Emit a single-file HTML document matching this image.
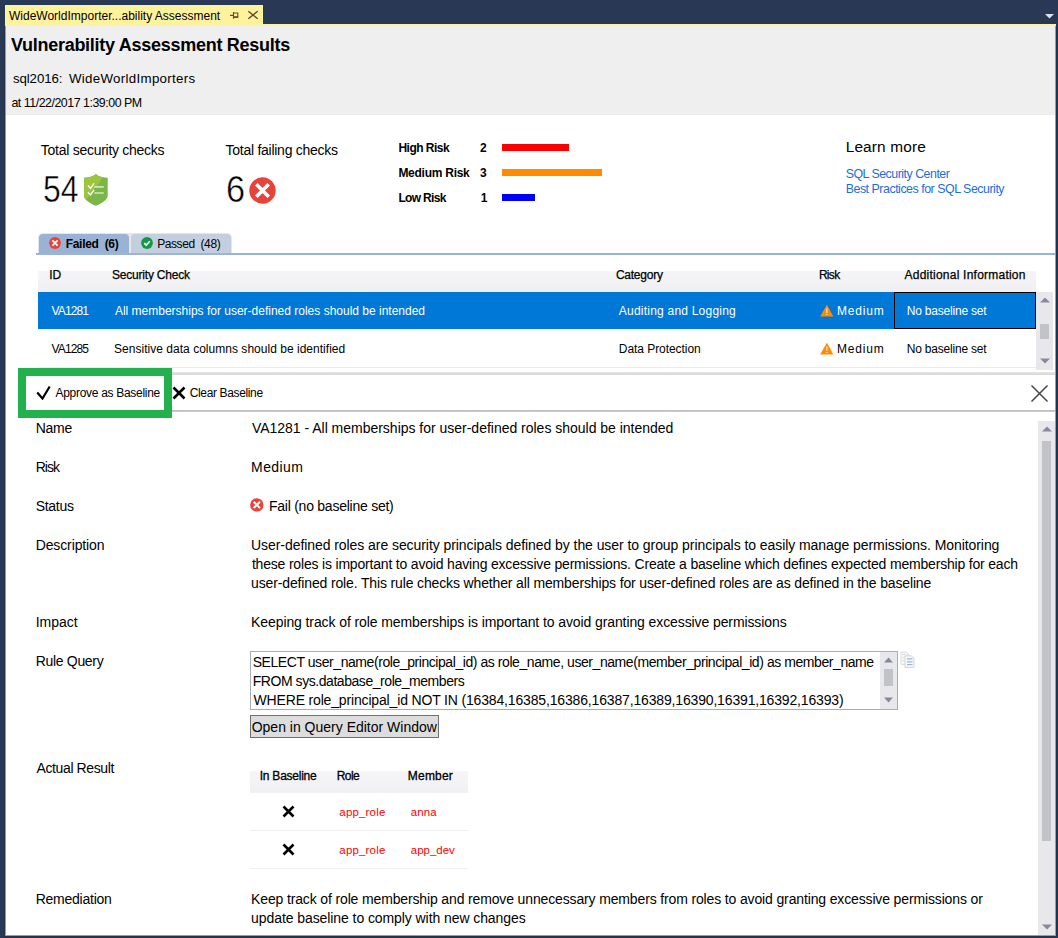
<!DOCTYPE html>
<html><head><meta charset="utf-8"><title>Vulnerability Assessment Results</title>
<style>
html,body{margin:0;padding:0;width:1058px;height:938px;overflow:hidden;background:#293955;}
body{position:relative;font-family:"Liberation Sans",sans-serif;color:#000;}
.t{position:absolute;white-space:pre;}
.r{position:absolute;}
</style></head><body>
<div class="r" style="left:0px;top:0px;width:1058px;height:938px;background:#293955;"></div>
<div class="r" style="left:5px;top:24px;width:1051px;height:2px;background:#FFF29D;"></div>
<div class="r" style="left:5px;top:5px;width:258px;height:21px;background:#FFF29D;"></div>
<div class="r" style="left:5px;top:26px;width:1051px;height:910px;background:#8d9dc2;"></div>
<div class="r" style="left:6px;top:26px;width:1049px;height:89px;background:#EFEFEF;"></div>
<div class="r" style="left:6px;top:114px;width:1049px;height:1px;background:#ECECEC;"></div>
<div class="r" style="left:6px;top:115px;width:1049px;height:820px;background:#FFFFFF;"></div>
<div class="r" style="left:4px;top:26px;width:1px;height:910px;background:#22304a;"></div>
<div class="r" style="left:1056px;top:26px;width:1px;height:910px;background:#22304a;"></div>
<div class="r" style="left:4px;top:936px;width:1053px;height:1px;background:#22304a;"></div>
<div class="t" id="t0" style="left:9.00px;top:9.84px;font-size:12px;line-height:12px;">WideWorldImporter...ability Assessment</div>
<svg class="r" style="left:229px;top:10px" width="11" height="11" viewBox="0 0 11 11"><path d="M1 5.4H4.5M4.5 2.1V8.8M4.5 3H8.8V7.2M4.5 7.1H8.8" stroke="#5c4f32" stroke-width="1.1" fill="none"/><path d="M4.5 7.2H9.3" stroke="#5c4f32" stroke-width="1.5"/></svg>
<svg class="r" style="left:247px;top:10px" width="12" height="11" viewBox="0 0 12 11"><path d="M1.3 1.2L10.7 8.8M10.7 1.2L1.3 8.8" stroke="#5a4d33" stroke-width="1.4" fill="none"/></svg>
<svg class="r" style="left:1044.5px;top:13.5px" width="9" height="5" viewBox="0 0 9 5"><path d="M0 0H9L4.5 4.5Z" fill="#dfe1e8"/></svg>
<div class="t" id="t1" style="left:10.94px;top:36.16px;font-size:18px;line-height:18px;font-weight:bold;letter-spacing:-0.273px;">Vulnerability Assessment Results</div>
<div class="t" id="t2" style="left:12.88px;top:71.74px;font-size:13.3px;line-height:13.3px;letter-spacing:-0.088px;">sql2016:</div>
<div class="t" id="t3" style="left:68.88px;top:71.74px;font-size:13.3px;line-height:13.3px;letter-spacing:0.316px;">WideWorldImporters</div>
<div class="t" id="t4" style="left:11.44px;top:97.00px;font-size:12.4px;line-height:12.4px;letter-spacing:-0.478px;">at 11/22/2017 1:39:00 PM</div>
<div class="t" id="t5" style="left:40.82px;top:143.15px;font-size:14px;line-height:14px;letter-spacing:-0.27px;">Total security checks</div>
<div class="t" id="t6" style="left:43.40px;top:170.86px;font-size:37.5px;line-height:37.5px;"><span style="display:inline-block;transform:scaleX(0.852);transform-origin:0 0;-webkit-text-stroke:0.5px #fff">54</span></div>
<div class="t" id="t7" style="left:225.56px;top:143.15px;font-size:14px;line-height:14px;letter-spacing:-0.263px;">Total failing checks</div>
<div class="t" id="t8" style="left:226.30px;top:170.86px;font-size:37.5px;line-height:37.5px;"><span style="display:inline-block;transform:scaleX(0.915);transform-origin:0 0;-webkit-text-stroke:0.5px #fff">6</span></div>
<svg class="r" style="left:84px;top:174px" width="24" height="32" viewBox="0 0 24 32">
<defs><clipPath id="sc"><path d="M0 3.7C5 3.7 9 2.5 11.85 0C14.7 2.5 18.7 3.7 23.7 3.7V21.6C23.7 26 17 30 11.85 31.8C6.7 30 0 26 0 21.6Z"/></clipPath></defs>
<g clip-path="url(#sc)"><rect width="24" height="32" fill="#7ab648"/><path d="M0 0H21.8L-2.65 32H0Z" fill="#9bc53d"/></g>
<path d="M3.9 11.4L6.5 14.3L10.1 9.4M3.9 18.2L6.5 20.8L10.1 15.8" stroke="#fff" stroke-width="1.4" fill="none"/>
<path d="M10.3 12.9H19.7M10.3 19H19.7" stroke="#d4e8be" stroke-width="1.6"/>
</svg>
<svg class="r" style="left:248.5px;top:176.5px" width="27" height="27" viewBox="0 0 27 27">
<circle cx="13.5" cy="13.5" r="13.2" fill="#e8433a"/>
<path d="M7.3 7.3L19.7 19.7M19.7 7.3L7.3 19.7" stroke="#fff" stroke-width="3.6"/>
</svg>
<div class="t" id="t9" style="left:398.38px;top:141.84px;font-size:12px;line-height:12px;font-weight:bold;letter-spacing:-0.5px;">High Risk</div>
<div class="t" id="t10" style="left:479.88px;top:141.84px;font-size:12px;line-height:12px;font-weight:bold;letter-spacing:4.0px;">2</div>
<div class="r" style="left:502px;top:144px;width:67px;height:7px;background:#ff0000;"></div>
<div class="t" id="t11" style="left:398.38px;top:166.84px;font-size:12px;line-height:12px;font-weight:bold;letter-spacing:-0.26px;">Medium Risk</div>
<div class="t" id="t12" style="left:479.88px;top:166.84px;font-size:12px;line-height:12px;font-weight:bold;letter-spacing:5.0px;">3</div>
<div class="r" style="left:502px;top:169px;width:100px;height:7px;background:#ff8c00;"></div>
<div class="t" id="t13" style="left:398.38px;top:191.84px;font-size:12px;line-height:12px;font-weight:bold;letter-spacing:-0.657px;">Low Risk</div>
<div class="t" id="t14" style="left:480.82px;top:191.84px;font-size:12px;line-height:12px;font-weight:bold;letter-spacing:-4.8px;">1</div>
<div class="r" style="left:502px;top:194px;width:33px;height:7px;background:#0000ff;"></div>
<div class="t" id="t15" style="left:845.70px;top:138.96px;font-size:15.4px;line-height:15.4px;letter-spacing:0.157px;">Learn more</div>
<div class="t" id="t16" style="left:845.70px;top:167.80px;font-size:12.4px;line-height:12.4px;color:#1e6ed6;letter-spacing:-0.5px;">SQL Security Center</div>
<div class="t" id="t17" style="left:845.70px;top:183.10px;font-size:12.4px;line-height:12.4px;color:#1e6ed6;letter-spacing:-0.473px;">Best Practices for SQL Security</div>
<div class="r" style="left:36px;top:253px;width:1019px;height:2px;background:#9bb4d6;"></div>
<div class="r" style="left:37.5px;top:232.5px;width:194.0px;height:20.5px;background:#e6e6e6;border-radius:5px 5px 0 0;"></div>
<div class="r" style="left:38.5px;top:233.5px;width:90.5px;height:19.5px;background:#9ab2d4;border-radius:4px 4px 0 0;"></div>
<div class="r" style="left:131px;top:233.5px;width:99.5px;height:19.5px;background:#c3cfde;border-radius:4px 4px 0 0;"></div>
<svg class="r" style="left:49px;top:237px" width="12" height="12" viewBox="0 0 12 12"><circle cx="6" cy="6" r="5.9" fill="#e8433a"/><path d="M3.4 3.4L8.6 8.6M8.6 3.4L3.4 8.6" stroke="#fff" stroke-width="1.7"/></svg>
<div class="t" id="t18" style="left:65.70px;top:237.54px;font-size:12px;line-height:12px;font-weight:bold;letter-spacing:-0.3px;">Failed&nbsp; (6)</div>
<svg class="r" style="left:141px;top:237px" width="12" height="12" viewBox="0 0 12 12"><circle cx="6" cy="6" r="5.9" fill="#13984a"/><path d="M3.2 6.2L5.2 8.1L8.8 4.3" stroke="#fff" stroke-width="1.6" fill="none"/></svg>
<div class="t" id="t19" style="left:157.20px;top:237.54px;font-size:12px;line-height:12px;letter-spacing:-0.417px;">Passed&nbsp; (48)</div>
<div class="r" style="left:38px;top:271px;width:998px;height:21px;background:linear-gradient(#f5f5f7,#f0f0f2);"></div>
<div class="t" id="t20" style="left:49.20px;top:269.04px;font-size:12px;line-height:12px;-webkit-text-stroke:0.25px #000;">ID</div>
<div class="t" id="t21" style="left:111.94px;top:269.04px;font-size:12px;line-height:12px;letter-spacing:-0.201px;-webkit-text-stroke:0.25px #000;">Security Check</div>
<div class="t" id="t22" style="left:615.88px;top:269.04px;font-size:12px;line-height:12px;letter-spacing:-0.231px;-webkit-text-stroke:0.25px #000;">Category</div>
<div class="t" id="t23" style="left:818.88px;top:269.04px;font-size:12px;line-height:12px;letter-spacing:-0.667px;-webkit-text-stroke:0.25px #000;">Risk</div>
<div class="t" id="t24" style="left:904.56px;top:269.04px;font-size:12px;line-height:12px;letter-spacing:0.229px;-webkit-text-stroke:0.25px #000;">Additional Information</div>
<div class="r" style="left:38px;top:292px;width:998px;height:37px;background:#0078d7;"></div>
<div class="r" style="left:894px;top:292px;width:142px;height:37px;background:transparent;box-sizing:border-box;border:1.5px solid #000;"></div>
<div class="t" id="t25" style="left:51.56px;top:304.84px;font-size:12px;line-height:12px;color:#fff;letter-spacing:-0.88px;">VA1281</div>
<div class="t" id="t26" style="left:114.88px;top:304.84px;font-size:12px;line-height:12px;color:#fff;">All memberships for user-defined roles should be intended</div>
<div class="t" id="t27" style="left:618.82px;top:304.84px;font-size:12px;line-height:12px;color:#fff;letter-spacing:0.22px;">Auditing and Logging</div>
<svg class="r" style="left:819.5px;top:304.7px" width="14" height="12" viewBox="0 0 14 12"><path d="M6.4 0.4Q6.9 -0.2 7.4 0.4L13.2 11.2Q13.3 11.6 12.9 11.6H0.6Q0.2 11.6 0.3 11.2Z" fill="#ff8c00"/><path d="M6.85 3.2V7.9M6.85 8.9V10.1" stroke="#ffe8cc" stroke-width="1.1"/></svg>
<div class="t" id="t28" style="left:837.08px;top:304.84px;font-size:12px;line-height:12px;color:#fff;letter-spacing:0.8px;">Medium</div>
<div class="t" id="t29" style="left:906.76px;top:304.84px;font-size:12px;line-height:12px;color:#fff;letter-spacing:-0.199px;">No baseline set</div>
<div class="t" id="t30" style="left:51.56px;top:342.84px;font-size:12px;line-height:12px;letter-spacing:-0.88px;">VA1285</div>
<div class="t" id="t31" style="left:114.08px;top:342.84px;font-size:12px;line-height:12px;letter-spacing:0.024px;">Sensitive data columns should be identified</div>
<div class="t" id="t32" style="left:618.82px;top:342.84px;font-size:12px;line-height:12px;letter-spacing:-0.057px;">Data Protection</div>
<svg class="r" style="left:819.5px;top:342.7px" width="14" height="12" viewBox="0 0 14 12"><path d="M6.4 0.4Q6.9 -0.2 7.4 0.4L13.2 11.2Q13.3 11.6 12.9 11.6H0.6Q0.2 11.6 0.3 11.2Z" fill="#ff8c00"/><path d="M6.85 3.2V7.9M6.85 8.9V10.1" stroke="#ffe8cc" stroke-width="1.1"/></svg>
<div class="t" id="t33" style="left:837.08px;top:342.84px;font-size:12px;line-height:12px;letter-spacing:0.8px;">Medium</div>
<div class="t" id="t34" style="left:906.76px;top:342.84px;font-size:12px;line-height:12px;letter-spacing:-0.199px;">No baseline set</div>
<div class="r" style="left:38px;top:367px;width:998px;height:1px;background:#ececec;"></div>
<div class="r" style="left:1036px;top:292px;width:17px;height:78px;background:#e8e8ec;"></div>
<svg class="r" style="left:1040px;top:297px" width="10" height="6" viewBox="0 0 10 6"><path d="M0 5.5H10L5 0.5Z" fill="#868999"/></svg>
<div class="r" style="left:1040px;top:324px;width:9px;height:15px;background:#c2c3c9;"></div>
<svg class="r" style="left:1040px;top:358px" width="10" height="6" viewBox="0 0 10 6"><path d="M0 0.5H10L5 5.5Z" fill="#868999"/></svg>
<div class="r" style="left:36px;top:372px;width:1019px;height:3px;background:linear-gradient(#e6e6e6,#d6d6d6);"></div>
<div class="r" style="left:36px;top:410px;width:1019px;height:2px;background:linear-gradient(#b9b9b9,#d0d0d0);"></div>
<svg class="r" style="left:36px;top:385px" width="15" height="15" viewBox="0 0 15 15"><path d="M1.2 7.5L6.5 13.5L13.7 1.5" stroke="#000" stroke-width="2.2" fill="none"/></svg>
<div class="t" id="t35" style="left:55.56px;top:386.84px;font-size:12px;line-height:12px;letter-spacing:-0.301px;">Approve as Baseline</div>
<svg class="r" style="left:172px;top:386px" width="14" height="14" viewBox="0 0 14 14"><path d="M1.5 1.5L12.5 12.5M12.5 1.5L1.5 12.5" stroke="#000" stroke-width="2.6" fill="none"/></svg>
<div class="t" id="t36" style="left:189.70px;top:386.84px;font-size:12px;line-height:12px;letter-spacing:-0.355px;">Clear Baseline</div>
<svg class="r" style="left:1030px;top:383.5px" width="19" height="19" viewBox="0 0 19 19"><path d="M1.5 1.5L17.5 17.5M17.5 1.5L1.5 17.5" stroke="#444" stroke-width="1.5" fill="none"/></svg>
<div class="r" style="left:18px;top:368px;width:154px;height:50px;background:transparent;box-sizing:border-box;border:8px solid #22b14c;"></div>
<div class="t" id="t37" style="left:35.70px;top:421.25px;font-size:14px;line-height:14px;letter-spacing:-0.267px;">Name</div>
<div class="t" id="t38" style="left:35.70px;top:460.25px;font-size:14px;line-height:14px;letter-spacing:-0.934px;">Risk</div>
<div class="t" id="t39" style="left:35.70px;top:499.15px;font-size:14px;line-height:14px;letter-spacing:-0.28px;">Status</div>
<div class="t" id="t40" style="left:35.70px;top:538.15px;font-size:14px;line-height:14px;letter-spacing:-0.12px;">Description</div>
<div class="t" id="t41" style="left:35.70px;top:615.05px;font-size:14px;line-height:14px;">Impact</div>
<div class="t" id="t42" style="left:35.70px;top:653.95px;font-size:14px;line-height:14px;letter-spacing:-0.313px;">Rule Query</div>
<div class="t" id="t43" style="left:36.50px;top:761.05px;font-size:14px;line-height:14px;letter-spacing:-0.384px;">Actual Result</div>
<div class="t" id="t44" style="left:35.70px;top:892.05px;font-size:14px;line-height:14px;letter-spacing:-0.24px;">Remediation</div>
<div class="t" id="t45" style="left:251.88px;top:421.25px;font-size:14px;line-height:14px;letter-spacing:-0.013px;">VA1281 - All memberships for user-defined roles should be intended</div>
<div class="t" id="t46" style="left:251.08px;top:460.25px;font-size:14px;line-height:14px;letter-spacing:0.4px;">Medium</div>
<svg class="r" style="left:250px;top:498px" width="14" height="14" viewBox="0 0 14 14"><circle cx="6.8" cy="6.9" r="6.7" fill="#e8433a"/><path d="M3.6 3.7L10 10.1M10 3.7L3.6 10.1" stroke="#fff" stroke-width="2"/></svg>
<div class="t" id="t47" style="left:268.96px;top:499.15px;font-size:14px;line-height:14px;letter-spacing:-0.246px;">Fail (no baseline set)</div>
<div class="t" id="t48" style="left:251.08px;top:538.15px;font-size:14px;line-height:14px;letter-spacing:-0.066px;">User-defined roles are security principals defined by the user to group principals to easily manage permissions. Monitoring</div>
<div class="t" id="t49" style="left:251.88px;top:556.95px;font-size:14px;line-height:14px;letter-spacing:-0.186px;">these roles is important to avoid having excessive permissions. Create a baseline which defines expected membership for each</div>
<div class="t" id="t50" style="left:251.08px;top:575.95px;font-size:14px;line-height:14px;letter-spacing:-0.143px;">user-defined role. This rule checks whether all memberships for user-defined roles are as defined in the baseline</div>
<div class="t" id="t51" style="left:251.08px;top:615.05px;font-size:14px;line-height:14px;letter-spacing:-0.098px;">Keeping track of role memberships is important to avoid granting excessive permissions</div>
<div class="r" style="left:250px;top:651px;width:648px;height:59px;background:#fff;box-sizing:border-box;border:1px solid #abadb3;"></div>
<div class="t" id="t52" style="left:252.70px;top:655.35px;font-size:14px;line-height:14px;letter-spacing:-0.431px;">SELECT user_name(role_principal_id) as role_name, user_name(member_principal_id) as member_name</div>
<div class="t" id="t53" style="left:252.70px;top:674.15px;font-size:14px;line-height:14px;letter-spacing:-0.442px;">FROM sys.database_role_members</div>
<div class="t" id="t54" style="left:253.50px;top:692.85px;font-size:14px;line-height:14px;letter-spacing:-0.16px;">WHERE role_principal_id NOT IN (16384,16385,16386,16387,16389,16390,16391,16392,16393)</div>
<div class="r" style="left:880px;top:652px;width:17px;height:57px;background:#e8e8ec;"></div>
<svg class="r" style="left:884px;top:657px" width="9" height="6" viewBox="0 0 9 6"><path d="M0 5.5H9L4.5 0.5Z" fill="#868999"/></svg>
<div class="r" style="left:884px;top:669px;width:9px;height:17px;background:#c2c3c9;"></div>
<svg class="r" style="left:884px;top:697px" width="9" height="6" viewBox="0 0 9 6"><path d="M0 0.5H9L4.5 5.5Z" fill="#868999"/></svg>
<svg class="r" style="left:900px;top:651px" width="16" height="18" viewBox="0 0 16 18">
<path d="M1 1H6.5L8.5 3V13.5H1Z" fill="#f6f6f6" stroke="#dcdcdc" stroke-width="1"/>
<path d="M2.5 3.5H5.5M2.5 6.5H4.5M2.5 9.5H4.5" stroke="#cfe0f3" stroke-width="1"/>
<path d="M5 4.8H11.5L14 7.3V16.5H5Z" fill="#f8f8f8" stroke="#d6d6d6" stroke-width="1"/>
<path d="M7 7.8H12.5M7 10.8H12.5M7 13.7H12.5" stroke="#93b8e4" stroke-width="1.3"/>
</svg>
<div class="r" style="left:250px;top:715px;width:189px;height:23px;background:#dddddd;box-sizing:border-box;border:1px solid #707070;"></div>
<div class="t" id="t55" style="left:251.70px;top:720.05px;font-size:14px;line-height:14px;">Open in Query Editor Window</div>
<div class="r" style="left:250px;top:771px;width:218px;height:22px;background:linear-gradient(#f6f6f8,#f0f0f2);"></div>
<div class="t" id="t56" style="left:259.76px;top:770.04px;font-size:12px;line-height:12px;letter-spacing:-0.24px;-webkit-text-stroke:0.3px #000;">In Baseline</div>
<div class="t" id="t57" style="left:336.70px;top:770.04px;font-size:12px;line-height:12px;letter-spacing:-0.533px;-webkit-text-stroke:0.3px #000;">Role</div>
<div class="t" id="t58" style="left:407.82px;top:770.04px;font-size:12px;line-height:12px;letter-spacing:0.2px;-webkit-text-stroke:0.3px #000;">Member</div>
<svg class="r" style="left:282px;top:805.3px" width="13" height="13" viewBox="0 0 13 13"><path d="M1.5 1.5L11.5 11.5M11.5 1.5L1.5 11.5" stroke="#000" stroke-width="2.6"/></svg>
<div class="t" id="t59" style="left:339.32px;top:807.07px;font-size:11.5px;line-height:11.5px;color:#ff0000;letter-spacing:0.174px;">app_role</div>
<div class="t" id="t60" style="left:410.82px;top:807.07px;font-size:11.5px;line-height:11.5px;color:#ff0000;letter-spacing:0.068px;">anna</div>
<svg class="r" style="left:282px;top:843.4px" width="13" height="13" viewBox="0 0 13 13"><path d="M1.5 1.5L11.5 11.5M11.5 1.5L1.5 11.5" stroke="#000" stroke-width="2.6"/></svg>
<div class="t" id="t61" style="left:339.32px;top:845.17px;font-size:11.5px;line-height:11.5px;color:#ff0000;letter-spacing:0.174px;">app_role</div>
<div class="t" id="t62" style="left:410.82px;top:845.17px;font-size:11.5px;line-height:11.5px;color:#ff0000;letter-spacing:-0.031px;">app_dev</div>
<div class="r" style="left:250px;top:830px;width:218px;height:1px;background:#f0f0f0;"></div>
<div class="r" style="left:250px;top:868px;width:218px;height:1px;background:#f0f0f0;"></div>
<div class="t" id="t63" style="left:251.08px;top:891.75px;font-size:14px;line-height:14px;letter-spacing:-0.142px;">Keep track of role membership and remove unnecessary members from roles to avoid granting excessive permissions or</div>
<div class="t" id="t64" style="left:251.08px;top:910.55px;font-size:14px;line-height:14px;letter-spacing:-0.079px;">update baseline to comply with new changes</div>
<div class="r" style="left:1038px;top:421px;width:17px;height:514px;background:#e8e8ec;"></div>
<svg class="r" style="left:1042px;top:426.3px" width="10" height="6" viewBox="0 0 10 6"><path d="M0 5.5H10L5 0.5Z" fill="#868999"/></svg>
<div class="r" style="left:1042px;top:441px;width:9px;height:400px;background:#c2c3c9;"></div>
<svg class="r" style="left:1042px;top:924px" width="10" height="6" viewBox="0 0 10 6"><path d="M0 0.5H10L5 5.5Z" fill="#868999"/></svg>
</body></html>
